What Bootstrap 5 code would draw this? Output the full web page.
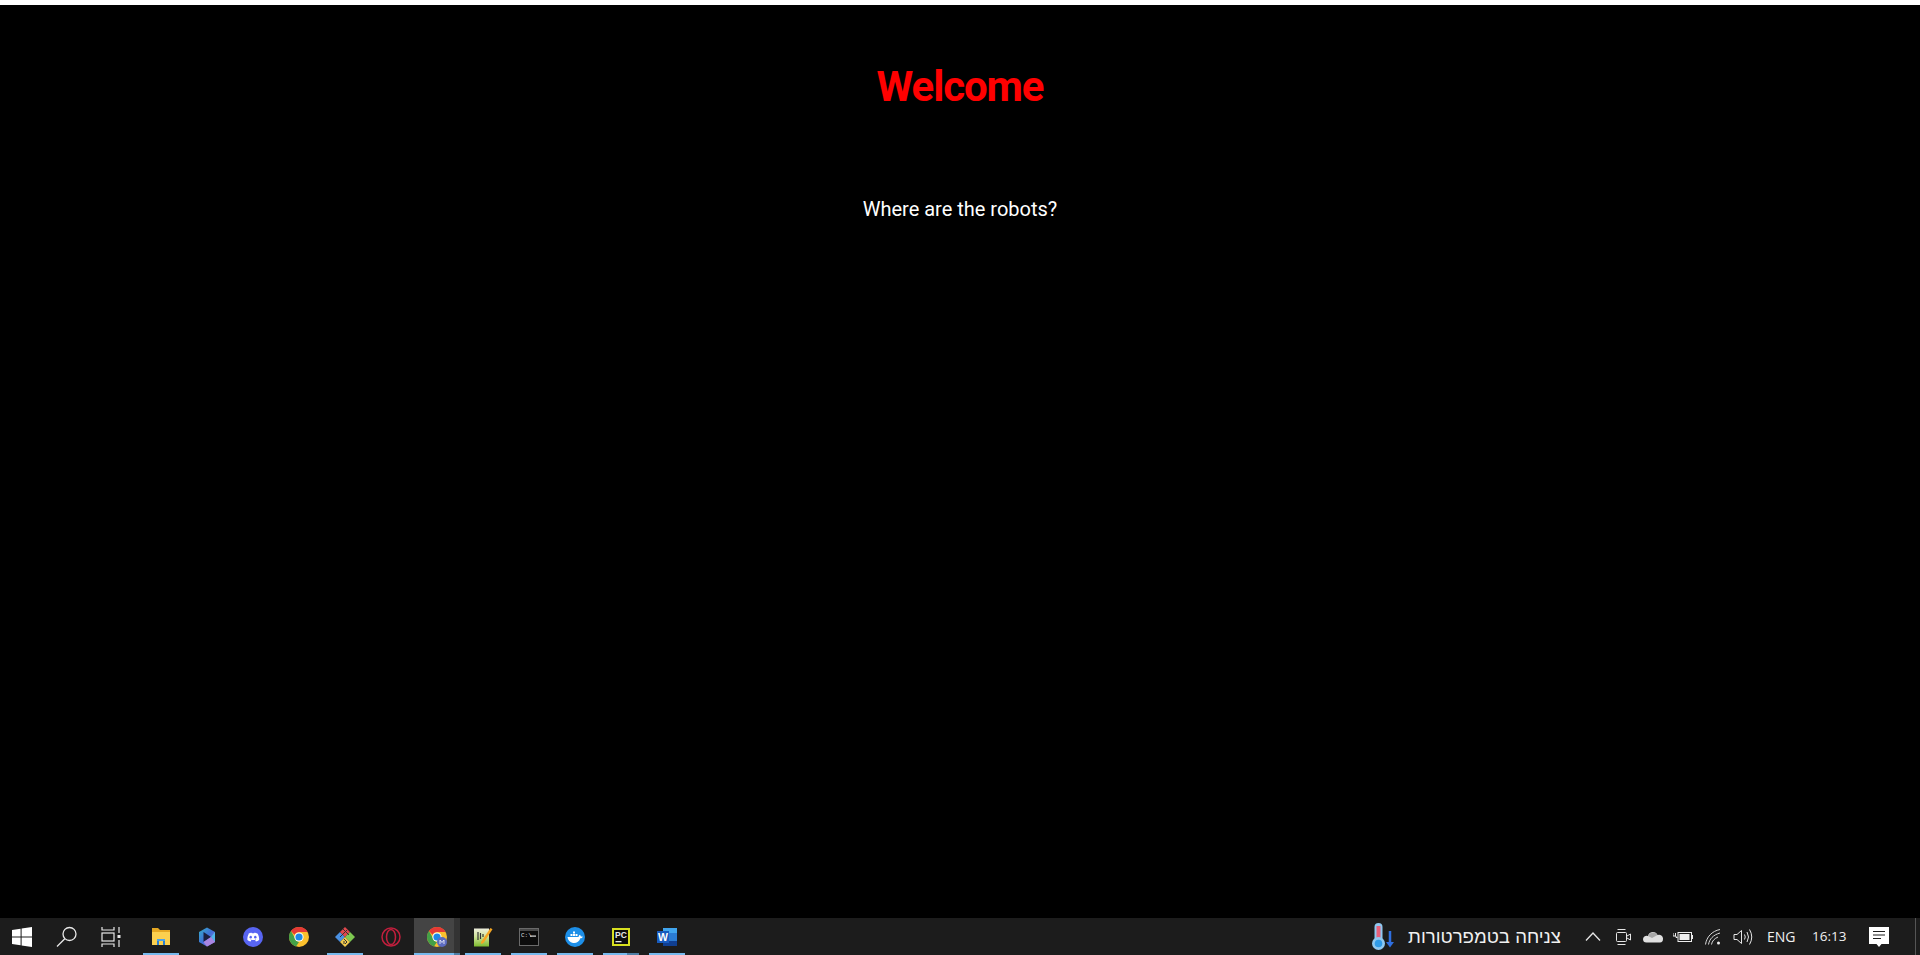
<!DOCTYPE html>
<html lang="en">

<head>
  <meta charset="UTF-8" />
  <meta name="viewport" content="width=device-width, initial-scale=1.0" />
  <title>Welcome</title>
  <link href="https://cdn.jsdelivr.net/npm/bootstrap@5.3.0/dist/css/bootstrap.min.css" rel="stylesheet" />
  <style>
    html, body {
      height: 100%;
    }

    body {
      background-color: #fff;
      overflow: hidden;
    }

    .page-shell {
      height: 955px;
      padding-top: 5px;
    }

    .robot-page {
      background-color: #000;
      font-family: Roboto, sans-serif;
      text-align: center;
    }

    .robot-title {
      color: #f00;
      font-size: 42px;
      font-weight: 700;
      line-height: 50px;
      letter-spacing: -1.1px;
      margin: 57px 0 0;
    }

    .robot-text {
      color: #fff;
      font-size: 20px;
      line-height: 24px;
      margin: 85px 0 0;
    }

    .task-bar {
      height: 37px;
      background-color: #1c1c1c;
      color: #f0f0f0;
      font-family: "Open Sans", "Liberation Sans", sans-serif;
    }

    .task-slot {
      width: 46px;
      height: 37px;
    }

    .slot-start { width: 44px; }
    .slot-view { width: 42px; margin-right: 6px; }

    .slot-open-narrow {
      background: linear-gradient(#76b9ed, #76b9ed) no-repeat center bottom / 36px 2px;
    }

    .slot-open-pair {
      background: linear-gradient(to right, #76b9ed 0, #76b9ed 24px, #4f7fa6 24px) no-repeat center bottom / 36px 2px;
    }

    .slot-active {
      background: linear-gradient(to right, #76b9ed 0, #76b9ed 40px, #4f7fa6 40px) no-repeat left bottom / 100% 2px, linear-gradient(to right, #444 0, #444 40px, #333 40px);
    }

    .tray-weather {
      padding-right: 17px;
    }

    .weather-text {
      font-family: "Liberation Sans", sans-serif;
      font-size: 18.6px;
      margin-left: 14px;
    }

    .tray-slot {
      width: 30px;
      height: 37px;
    }

    .tray-label {
      line-height: 37px;
      white-space: nowrap;
    }

    .tray-lang { width: 28px; margin-left: 9px; margin-right: 17px; font-size: 14px; }
    .tray-clock { width: 33px; margin-right: 15px; font-size: 13.5px; }
    .tray-note { width: 38px; }

    .desk-edge {
      width: 5px;
      height: 37px;
      border-left: 1px solid #555;
      margin-left: 17px;
    }
  </style>
</head>

<body>
  <div class="page-shell d-flex flex-column">
    <main class="robot-page flex-grow-1">
      <h1 class="robot-title">Welcome</h1>
      <p class="robot-text">Where are the robots?</p>
    </main>

    <footer class="task-bar d-flex align-items-center">
      <div class="task-slot slot-start d-flex align-items-center justify-content-center">
        <svg width="20" height="20" viewBox="0 0 20 20" fill="#fff"><path d="M0 3l8.600-1.200v7.700H0zM9.600 1.600L20 0v9.500H9.600zM0 10.500h8.600v7.700L0 17zM9.600 10.500H20V20L9.600 18.400z"/></svg>
      </div>
      <div class="task-slot d-flex align-items-center justify-content-center">
        <svg width="22" height="22" viewBox="0 0 22 22" fill="none" stroke="#e8e8e8" stroke-width="1.300"><circle cx="13.500" cy="8" r="6.500"/><path d="M8.800 12.800L1 20.500"/></svg>
      </div>
      <div class="task-slot slot-view d-flex align-items-center justify-content-center">
        <svg width="20" height="20" viewBox="0 0 20 20" fill="none" stroke="#e8e8e8" stroke-width="1.200"><path d="M1 0v3h12V0M1 20v-3h12v3"/><rect x="1" y="6" width="12" height="8"/><path d="M18 0v6M18 13v7"/><rect x="16.500" y="8" width="3" height="3" fill="#e8e8e8" stroke="none"/></svg>
      </div>

      <div class="task-slot slot-open-narrow d-flex align-items-center justify-content-center">
        <svg width="20" height="20" viewBox="0 0 20 20"><path d="M1 1h6l2 2h10v3H1z" fill="#e5a823"/><rect x="1" y="5" width="18" height="13" fill="#fbd04f"/><path d="M6 18v-6h8v6h-2v-4H8v4z" fill="#2b7fd0"/><rect x="6" y="12" width="8" height="2" fill="#4aa3e8"/></svg>
      </div>
      <div class="task-slot d-flex align-items-center justify-content-center">
        <svg width="20" height="20" viewBox="0 0 20 20">
          <defs><linearGradient id="bingA" x1="0" y1="0" x2="1" y2="1"><stop offset="0" stop-color="#35b0c8"/><stop offset=".5" stop-color="#3f6fd8"/><stop offset="1" stop-color="#b07be0"/></linearGradient></defs>
          <path d="M10 .5l8 4.500v10l-8 4.500-8-4.500V5z" fill="url(#bingA)"/>
          <path d="M6.500 5l7.500 5-7.500 5z" fill="#1b2140"/><path d="M14 10l4-5v10z" fill="#4fb4e8"/><path d="M6.500 15l7.500-5 4 5-8 4.500z" fill="#a985e2"/>
        </svg>
      </div>
      <div class="task-slot d-flex align-items-center justify-content-center">
        <svg width="20" height="20" viewBox="0 0 20 20"><circle cx="10" cy="10" r="10" fill="#5865f2"/><path d="M5.300 6.700c1.500-.9 3-1.100 3.300-1l.3.600h2.200l.3-.6c.3-.1 1.800.1 3.300 1 1 1.900 1.600 4 1.400 6.200-.9.800-2.200 1.300-3.200 1.500l-.7-1.100.9-.5-.3-.3c-1.500.7-3.600.7-5.100 0l-.3.300.9.500-.7 1.100c-1-.2-2.300-.7-3.200-1.500-.2-2.200.4-4.300 1.400-6.200z" fill="#fff"/><ellipse cx="7.700" cy="10.200" rx="1.200" ry="1.400" fill="#5865f2"/><ellipse cx="12.300" cy="10.200" rx="1.200" ry="1.400" fill="#5865f2"/></svg>
      </div>
      <div class="task-slot d-flex align-items-center justify-content-center">
        <svg width="20" height="20" viewBox="0 0 20 20"><circle cx="10" cy="10" r="10" fill="#fbc02d"/><path d="M10 0a10 10 0 0 1 8.660 5H10a5 5 0 0 0-4.500 2.800L1.900 4.100A10 10 0 0 1 10 0z" fill="#e53935"/><path d="M1.900 4.100l4 6.900A5 5 0 0 0 10 15l-3 4.500A10 10 0 0 1 1.900 4.100z" fill="#43a047"/><circle cx="10" cy="10" r="4.600" fill="#fff"/><circle cx="10" cy="10" r="3.600" fill="#1e88e5"/></svg>
      </div>
      <div class="task-slot slot-open-narrow d-flex align-items-center justify-content-center">
        <svg width="20" height="20" viewBox="0 0 20 20"><path d="M0 10l5-5 5 5-5 5z" fill="#4a90e2"/><path d="M5 5l5-5 5 5-5 5z" fill="#e0474c"/><path d="M10 10l5-5 5 5-5 5z" fill="#7ec850"/><path d="M5 15l5-5 5 5-5 5z" fill="#f2c94c"/><path d="M8 2l6 6M12 3L5 10M9 12l3 3 -2 2M9 14v3" stroke="#333" stroke-width="1" fill="none"/></svg>
      </div>
      <div class="task-slot d-flex align-items-center justify-content-center">
        <svg width="20" height="20" viewBox="0 0 20 20" fill="none" stroke="#c01f3d" stroke-width="1.500"><circle cx="10" cy="10" r="9"/><ellipse cx="10" cy="10" rx="4.500" ry="7.500"/></svg>
      </div>
      <div class="task-slot slot-active d-flex align-items-center justify-content-center">
        <svg width="20" height="20" viewBox="0 0 20 20"><circle cx="10" cy="10" r="10" fill="#fbc02d"/><path d="M10 0a10 10 0 0 1 8.660 5H10a5 5 0 0 0-4.500 2.800L1.900 4.100A10 10 0 0 1 10 0z" fill="#e53935"/><path d="M1.900 4.100l4 6.900A5 5 0 0 0 10 15l-3 4.500A10 10 0 0 1 1.900 4.100z" fill="#43a047"/><circle cx="10" cy="10" r="4.600" fill="#fff"/><circle cx="10" cy="10" r="3.600" fill="#1e88e5"/><circle cx="15" cy="15" r="5" fill="#5c6bc0"/><path d="M13 17v-4l2 2.500 2-2.500v4" stroke="#e8eaf6" stroke-width=".9" fill="none"/></svg>
      </div>
      <div class="task-slot slot-open-narrow d-flex align-items-center justify-content-center">
        <svg width="20" height="20" viewBox="0 0 20 20">
          <defs><linearGradient id="padA" x1="0" y1="0" x2="0" y2="1"><stop offset="0" stop-color="#eeeedd"/><stop offset=".45" stop-color="#cfe39a"/><stop offset="1" stop-color="#7dbb2e"/></linearGradient></defs>
          <rect x="1" y="1.500" width="15" height="18" fill="url(#padA)"/><path d="M5 5v8M7.500 6v6M10 7v3" stroke="#333" stroke-width="1.200"/><path d="M8 15L17.500 1l2 1.300-9 13.700-2.500 1z" fill="#f5a623"/>
        </svg>
      </div>
      <div class="task-slot slot-open-narrow d-flex align-items-center justify-content-center">
        <svg width="20" height="18" viewBox="0 0 20 18"><rect x=".5" y=".5" width="19" height="17" fill="#0c0c0c" stroke="#6a6a6a"/><rect x="1" y="1" width="18" height="2" fill="#4a4a4a"/><text x="2" y="9" font-family="Liberation Mono, monospace" font-size="6" fill="#ddd">C:\</text><rect x="11" y="7.500" width="6" height="1.200" fill="#ddd"/></svg>
      </div>
      <div class="task-slot slot-open-narrow d-flex align-items-center justify-content-center">
        <svg width="20" height="20" viewBox="0 0 20 20"><circle cx="10" cy="10" r="10" fill="#1d8fe8"/><path d="M2.500 10h11c.2-1 .8-2 1.500-2.200.5.600.8 1.200.8 1.800.8-.3 1.500-.2 2 .2-.5 1-1.400 1.500-2.500 1.500C14.500 15 11 16.500 8 16 5 15.500 2.800 13 2.500 10z" fill="#fff"/><path d="M5.500 7h2v2h-2zM8 7h2v2H8zM8 4.500h2v2H8zM10.500 7h2v2h-2z" fill="#fff"/></svg>
      </div>
      <div class="task-slot slot-open-pair d-flex align-items-center justify-content-center">
        <svg width="18" height="18" viewBox="0 0 18 18"><rect x="1" y="1" width="16" height="16" fill="#0d0d0d" stroke="#d8e020" stroke-width="2"/><text x="3" y="10" font-family="Liberation Sans, sans-serif" font-size="8.500" font-weight="700" fill="#e8e8e8">PC</text><rect x="3.500" y="13" width="6" height="1.300" fill="#e8e8e8"/></svg>
      </div>
      <div class="task-slot slot-open-narrow d-flex align-items-center justify-content-center">
        <svg width="20" height="18" viewBox="0 0 20 18"><rect x="6" y="0" width="14" height="18" rx="1" fill="#2b7cd3"/><rect x="6" y="0" width="14" height="5" fill="#41a5ee"/><rect x="6" y="13" width="14" height="5" fill="#103f91"/><rect x="0" y="3" width="12" height="12" fill="#185abd"/><text x="1" y="12.800" font-family="Liberation Sans, sans-serif" font-size="10.500" font-weight="700" fill="#fff">W</text></svg>
      </div>

      <div class="ms-auto d-flex align-items-center">
        <div class="tray-weather d-flex align-items-center">
          <svg width="22" height="27" viewBox="0 0 22 27"><rect x="2.500" y="0" width="8" height="20" rx="4" fill="#8fc8f0"/><rect x="4.500" y="3" width="4" height="13" fill="#e8607a"/><circle cx="6.500" cy="20.500" r="6.500" fill="#8fc8f0"/><circle cx="6.500" cy="20.500" r="3.800" fill="#2f9be8"/><path d="M18 8v14" stroke="#2f6fe0" stroke-width="2.500"/><path d="M14 19l4 5.500 4-5.500z" fill="#2f6fe0"/></svg>
          <span class="weather-text" dir="rtl" lang="he">צניחה בטמפרטורות</span>
        </div>
        <div class="tray-slot d-flex align-items-center justify-content-center">
          <svg width="16" height="9" viewBox="0 0 16 9" fill="none" stroke="#e6e6e6" stroke-width="1.300"><path d="M1 8.500L8 1l7 7.500"/></svg>
        </div>
        <div class="tray-slot d-flex align-items-center justify-content-center">
          <svg width="16" height="18" viewBox="0 0 16 18" fill="none" stroke="#e6e6e6" stroke-width="1"><path d="M2.500 1.500h8M2.500 16.500h8"/><rect x="1.500" y="4.500" width="10" height="9" rx="1"/><path d="M12 8l3.500-2v6L12 10"/></svg>
        </div>
        <div class="tray-slot d-flex align-items-center justify-content-center">
          <svg width="20" height="13" viewBox="0 0 20 13"><path d="M5 6a5 5 0 0 1 9.500-1A4 4 0 0 1 20 9c0 2-1 3.500-3 3.500H3.500A3.500 3.500 0 0 1 0 9a3.500 3.500 0 0 1 5-3z" fill="#e0e0e0"/><path d="M7 3.500a5 5 0 0 1 7.500 1.500L9 8 5 6a5 5 0 0 1 2-2.500z" fill="#a8a8a8"/></svg>
        </div>
        <div class="tray-slot d-flex align-items-center justify-content-center">
          <svg width="20" height="12" viewBox="0 0 20 12"><path d="M0 2v3M2.500 2v3M0 5h3v1.500h1.500" stroke="#eee" fill="none"/><rect x="5" y="1.500" width="13.500" height="9" fill="#1c1c1c" stroke="#eee"/><rect x="6.500" y="3" width="10" height="6" fill="#eee"/><rect x="19" y="4" width="1" height="4" fill="#eee"/></svg>
        </div>
        <div class="tray-slot d-flex align-items-center justify-content-center">
          <svg width="16" height="16" viewBox="0 0 16 16" fill="none" stroke="#d8d8d8" stroke-width="1"><path d="M.5 15.500C1.500 8 7 2 15 .5M3.500 15.500C4.500 10 8 6 15 4M6.500 15.500C7 12 9.500 9.500 13 8"/><circle cx="13.500" cy="14" r="1.500" fill="#eee" stroke="none"/></svg>
        </div>
        <div class="tray-slot d-flex align-items-center justify-content-center">
          <svg width="20" height="16" viewBox="0 0 20 16" fill="none" stroke="#e6e6e6" stroke-width="1"><path d="M1 5.500h3L8.500 1.500v13L4 10.500H1z"/><path d="M11.500 5.500q1.500 2.500 0 5M14 3q3 5 0 10M16.500 .5q4.500 7.500 0 15"/></svg>
        </div>
        <span class="tray-label tray-lang">ENG</span>
        <span class="tray-label tray-clock">16:13</span>
        <div class="tray-note d-flex align-items-center justify-content-center">
          <svg width="20" height="20" viewBox="0 0 20 20"><path d="M0 0h20v17h-7.500L10 20l-2.500-3H0z" fill="#fff"/><path d="M4 4.500h12M4 8h12M4 11.500h8" stroke="#1c1c1c" stroke-width="1.200"/></svg>
        </div>
        <div class="desk-edge"></div>
      </div>
    </footer>
  </div>

  <script src="https://cdn.jsdelivr.net/npm/bootstrap@5.3.0/dist/js/bootstrap.bundle.min.js"></script>
</body>

</html>
